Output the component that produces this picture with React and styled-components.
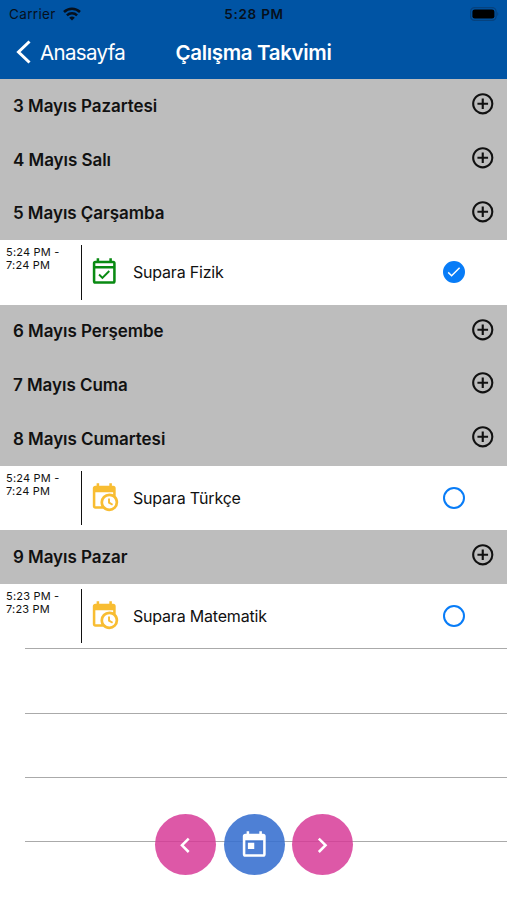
import styled, { createGlobalStyle } from "styled-components";

const GlobalStyle = createGlobalStyle`
  * {
    box-sizing: border-box;
  }
  body {
    margin: 0;
    background-color: white;
    font-family: Inter, "Liberation Sans", sans-serif;
    color: #111;
  }
`;

const Container = styled.div`
  position: relative;
  width: 507px;
  height: 900px;
  overflow: hidden;
  background-color: white;
`;

const Header = styled.header`
  height: 79px;
  background-color: #0054a4;
`;

const StatusBar = styled.div`
  height: 27px;
  padding: 0 8px 0 9px;
  display: grid;
  grid-template-columns: 1fr auto 1fr;
  align-items: center;
  color: #06101c;
  font-size: 13.5px;
`;

const Carrier = styled.div`
  display: flex;
  align-items: center;
  gap: 7px;
  letter-spacing: 0.35px;
`;

const Clock = styled.span`
  font-weight: 600;
  letter-spacing: 0.75px;
`;

const Battery = styled.svg`
  justify-self: end;
`;

const NavBar = styled.div`
  height: 52px;
  padding: 0 15px 2px;
  display: grid;
  grid-template-columns: 1fr auto 1fr;
  align-items: center;
  color: white;
`;

const Back = styled.div`
  display: flex;
  align-items: center;
  gap: 8px;
  font-size: 20.5px;
  letter-spacing: -0.65px;
`;

const Title = styled.h1`
  margin: 0;
  font-size: 20.5px;
  font-weight: 600;
  letter-spacing: -0.35px;
`;

const DayRow = styled.div`
  height: 53.75px;
  padding: 0 12px 4px 13px;
  display: flex;
  align-items: center;
  justify-content: space-between;
  background-color: #bdbdbd;
`;

const DayName = styled.span`
  padding-top: 4px;
  font-size: 17px;
  font-weight: 600;
  letter-spacing: -0.05px;
`;

const LessonRow = styled.div`
  height: 64.3px;
  padding: 5px 42px 5px 6px;
  display: flex;
  align-items: center;
`;

const Time = styled.div`
  align-self: stretch;
  width: 76px;
  padding-top: 1px;
  border-right: 1px solid #111;
  font-size: 11px;
  line-height: 13px;
  letter-spacing: 0.2px;
`;

const LessonIcon = styled.div`
  width: 51px;
  padding: 0 0 1px 7px;
  display: flex;
`;

const LessonName = styled.span`
  flex: 1;
  font-size: 16px;
  letter-spacing: -0.2px;
`;

const Check = styled.div`
  width: 22px;
  height: 22px;
  display: flex;
  align-items: center;
  justify-content: center;
  border: 2px solid #087cf7;
  border-radius: 50%;
  background-color: ${(props) => (props.$done ? "#087cf7" : "white")};
`;

const EmptyRow = styled.div`
  height: 64.4px;
  margin-left: 25px;
  border-top: 1px solid #aaa;
`;

const Actions = styled.div`
  position: absolute;
  left: 155px;
  top: 814px;
  display: flex;
  gap: 7.5px;
`;

const ActionButton = styled.button`
  width: 61px;
  height: 61px;
  padding: 1px 0 0;
  display: flex;
  align-items: center;
  justify-content: center;
  border: none;
  border-radius: 50%;
  color: white;
  background-color: ${(props) => props.$color};
`;

const paths = {
  plus: "M12,20C7.59,20 4,16.41 4,12C4,7.59 7.59,4 12,4C16.41,4 20,7.59 20,12C20,16.41 16.41,20 12,20M12,2A10,10 0 0,0 2,12A10,10 0 0,0 12,22A10,10 0 0,0 22,12A10,10 0 0,0 12,2M13,7H11V11H7V13H11V17H13V13H17V11H13V7Z",
  done: "M19,3H18V1H16V3H8V1H6V3H5A2,2 0 0,0 3,5V19A2,2 0 0,0 5,21H19A2,2 0 0,0 21,19V5A2,2 0 0,0 19,3M19,19H5V9H19V19M5,7V5H19V7H5M10.56,17.46L16.5,11.53L15.43,10.47L10.56,15.34L8.45,13.23L7.39,14.29L10.56,17.46Z",
  waiting:
    "M15,13H16.5V15.82L18.94,17.23L18.19,18.53L15,16.69V13M19,8H5V19H9.67C9.24,18.09 9,17.07 9,16A7,7 0 0,1 16,9C17.07,9 18.09,9.24 19,9.67V8M5,21C3.89,21 3,20.1 3,19V5C3,3.89 3.89,3 5,3H6V1H8V3H16V1H18V3H19A2,2 0 0,1 21,5V11.1C22.24,12.36 23,14.09 23,16A7,7 0 0,1 16,23C14.09,23 12.36,22.24 11.1,21H5M16,11.15A4.85,4.85 0 0,0 11.15,16C11.15,18.68 13.32,20.85 16,20.85A4.85,4.85 0 0,0 20.85,16C20.85,13.32 18.68,11.15 16,11.15Z",
  today:
    "M7,10H12V15H7M19,19H5V8H19M19,3H18V1H16V3H8V1H6V3H5A2,2 0 0,0 3,5V19A2,2 0 0,0 5,21H19A2,2 0 0,0 21,19V5A2,2 0 0,0 19,3Z",
  left: "M15.41,16.58L10.83,12L15.41,7.41L14,6L8,12L14,18L15.41,16.58Z",
  right: "M8.59,16.58L13.17,12L8.59,7.41L10,6L16,12L10,18L8.59,16.58Z",
};

const Icon = ({ name, size = 30.5, color = "currentColor" }) => (
  <svg width={size} height={size} viewBox="0 0 24 24" fill={color}>
    <path d={paths[name]} />
  </svg>
);

const days = [
  { name: "3 Mayıs Pazartesi", lessons: [] },
  { name: "4 Mayıs Salı", lessons: [] },
  {
    name: "5 Mayıs Çarşamba",
    lessons: [{ start: "5:24 PM", end: "7:24 PM", name: "Supara Fizik", done: true }],
  },
  { name: "6 Mayıs Perşembe", lessons: [] },
  { name: "7 Mayıs Cuma", lessons: [] },
  {
    name: "8 Mayıs Cumartesi",
    lessons: [{ start: "5:24 PM", end: "7:24 PM", name: "Supara Türkçe", done: false }],
  },
  {
    name: "9 Mayıs Pazar",
    lessons: [{ start: "5:23 PM", end: "7:23 PM", name: "Supara Matematik", done: false }],
  },
];

const Lesson = ({ lesson }) => (
  <LessonRow>
    <Time>
      {lesson.start} -<br />
      {lesson.end}
    </Time>
    <LessonIcon>
      {lesson.done ? (
        <Icon name="done" color="#098a12" />
      ) : (
        <Icon name="waiting" color="#f8bd32" />
      )}
    </LessonIcon>
    <LessonName>{lesson.name}</LessonName>
    <Check $done={lesson.done}>
      {lesson.done && (
        <svg width="14" height="12" viewBox="0 0 14 12" fill="none" stroke="white" strokeWidth="1.5">
          <path d="M1.2 6.4L4.6 9.7L12.6 1.8" />
        </svg>
      )}
    </Check>
  </LessonRow>
);

function App() {
  return (
    <Container>
      <GlobalStyle />
      <Header>
        <StatusBar>
          <Carrier>
            Carrier
            <svg width="18" height="14" viewBox="0 0 18 14" fill="none" stroke="currentColor" strokeWidth="2.5">
              <path d="M1 5C5.5 0.6 12.5 0.6 17 5" />
              <path d="M3.9 8.3C6.8 5.6 11.2 5.6 14.1 8.3" />
              <path d="M6.2 10.7L9 13.5L11.8 10.7C10.2 9.2 7.8 9.2 6.2 10.7Z" fill="currentColor" stroke="none" />
            </svg>
          </Carrier>
          <Clock>5:28 PM</Clock>
          <Battery width="29" height="14" viewBox="0 0 29 14">
            <rect x="0.6" y="0.6" width="25.5" height="12.8" rx="4" fill="none" stroke="#06427e" strokeWidth="1.2" />
            <rect x="2.4" y="2.4" width="22" height="9.2" rx="2.4" fill="#000" />
            <path d="M27.3 5V9C28.6 8.4 28.6 5.6 27.3 5Z" fill="#06427e" />
          </Battery>
        </StatusBar>
        <NavBar>
          <Back>
            <svg width="17" height="24" viewBox="0 0 17 24" fill="none" stroke="white" strokeWidth="3">
              <path d="M14.5 1.5L3.5 12L14.5 22.5" />
            </svg>
            Anasayfa
          </Back>
          <Title>Çalışma Takvimi</Title>
        </NavBar>
      </Header>

      {days.map((day) => (
        <div key={day.name}>
          <DayRow>
            <DayName>{day.name}</DayName>
            <Icon name="plus" size={25.5} />
          </DayRow>
          {day.lessons.map((lesson) => (
            <Lesson lesson={lesson} key={lesson.name} />
          ))}
        </div>
      ))}
      <EmptyRow />
      <EmptyRow />
      <EmptyRow />
      <EmptyRow />

      <Actions>
        <ActionButton $color="rgba(215, 56, 150, 0.84)">
          <Icon name="left" />
        </ActionButton>
        <ActionButton $color="rgba(53, 110, 207, 0.88)">
          <Icon name="today" />
        </ActionButton>
        <ActionButton $color="rgba(215, 56, 150, 0.84)">
          <Icon name="right" />
        </ActionButton>
      </Actions>
    </Container>
  );
}

export default App;
